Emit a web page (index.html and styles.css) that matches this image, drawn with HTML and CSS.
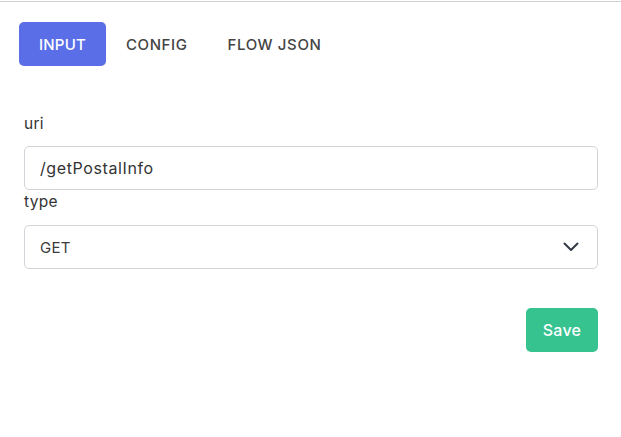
FILE: index.html
```html
<!DOCTYPE html>
<html>
<head>
<meta charset="utf-8">
<link rel="stylesheet" href="styles.css">
</head>
<body>
<div class="panel">
  <div class="tabs">
    <button class="tab active">INPUT</button>
    <button class="tab">CONFIG</button>
    <button class="tab">FLOW JSON</button>
  </div>
  <div class="form">
    <label class="label label-uri">uri</label>
    <div class="field"><span class="value value-uri">/getPostalInfo</span></div>
    <label class="label label-type">type</label>
    <div class="field select">
      <span class="value">GET</span>
      <svg class="chev" width="16" height="10" viewBox="0 0 16 10"><path d="M1.5 1.5 L8 8 L14.5 1.5" fill="none" stroke="#333a45" stroke-width="2" stroke-linecap="round" stroke-linejoin="round"/></svg>
    </div>
    <div class="actions">
      <button class="save">Save</button>
    </div>
  </div>
</div>
</body>
</html>
```
FILE: styles.css
```css
html, body {
  margin: 0;
  padding: 0;
  background: #ffffff;
}
body {
  padding-top: 1px;
  font-family: Inter, "Open Sans", sans-serif;
  color: #3a3a3a;
}
.panel {
  border-top: 1px solid #d2d2d2;
  background: #fff;
  padding: 20px 23px 13px 19px;
  box-shadow: 0 18px 22px rgba(0, 0, 0, 0.06);
}
.tabs {
  display: flex;
}
.tab {
  height: 44px;
  padding: 0 20px;
  border: none;
  background: transparent;
  font-family: inherit;
  font-size: 15px;
  font-weight: 500;
  color: #444;
  border-radius: 5px;
  cursor: pointer;
  letter-spacing: 0.6px;
}
.tab.active {
  background: #5a6ee8;
  color: #ffffff;
  letter-spacing: 0.2px;
}
.form {
  display: flex;
  flex-direction: column;
  padding-left: 5px;
  padding-top: 46px;
}
.label {
  font-size: 15.5px;
  line-height: 24px;
  color: #333;
  letter-spacing: 0.3px;
}
.label-uri {
  margin-bottom: 10px;
}
.label-type {
  margin-bottom: 11px;
}
.field {
  height: 44px;
  box-sizing: border-box;
  border: 1px solid #d3d3d9;
  border-radius: 5px;
  display: flex;
  align-items: center;
  padding-left: 15px;
  padding-right: 18px;
}
.value {
  font-size: 15px;
  color: #3b3b3b;
  letter-spacing: 0.3px;
}
.value-uri {
  font-size: 16px;
  color: #333;
  letter-spacing: 0.6px;
}
.select {
  justify-content: space-between;
}
.chev {
  display: block;
}
.actions {
  display: flex;
  justify-content: flex-end;
  margin-top: 39px;
}
.save {
  height: 44px;
  width: 72px;
  border: none;
  border-radius: 5px;
  background: #36c38f;
  color: #ffffff;
  font-family: inherit;
  font-size: 16px;
  font-weight: 500;
  letter-spacing: 0.3px;
  cursor: pointer;
}
```
